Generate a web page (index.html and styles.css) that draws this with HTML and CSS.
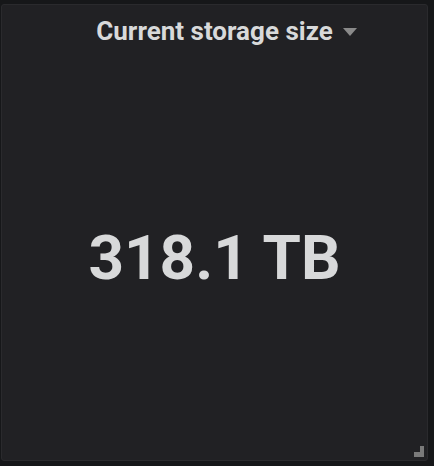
FILE: index.html
```html
<!DOCTYPE html>
<html lang="en">
<head>
    <meta charset="UTF-8">
    <meta name="viewport" content="width=device-width, initial-scale=1.0">
    <title>Current storage size</title>
    <link rel="stylesheet" href="styles.css">
</head>
<body>
    <div class="panel">
        <div class="panel-header">
            <span class="panel-title">Current storage size</span>
            <span class="panel-menu"></span>
        </div>
        <div class="panel-content">
            <span class="singlestat-value">318.1 TB</span>
        </div>
        <span class="resize-handle"></span>
    </div>
</body>
</html>
```

FILE: styles.css
```css
html, body {
    margin: 0;
    height: 100%;
    background-color: #161719;
}
body {
    padding: 4px 6px 5px 1px;
    box-sizing: border-box;
    font-family: Roboto, "Liberation Sans", sans-serif;
}
.panel {
    position: relative;
    height: 100%;
    box-sizing: border-box;
    background-color: #212124;
    border: 1px solid #2a2a2d;
    border-radius: 3px;
    display: flex;
    flex-direction: column;
}
.panel-header {
    display: flex;
    justify-content: center;
    align-items: center;
    gap: 10px;
    padding-top: 11px;
    padding-left: 24px;
}
.panel-title {
    color: #d8d9da;
    font-size: 26px;
    font-weight: 700;
}
.panel-menu {
    width: 0;
    height: 0;
    border-left: 7px solid transparent;
    border-right: 7px solid transparent;
    border-top: 8px solid #8a8a8a;
    margin-top: 2px;
}
.panel-content {
    flex: 1;
    display: flex;
    justify-content: center;
    align-items: center;
    padding-top: 8px;
}
.singlestat-value {
    color: #d8d9da;
    font-size: 62px;
    font-weight: 700;
}
.resize-handle {
    position: absolute;
    right: 3px;
    bottom: 3px;
    width: 10px;
    height: 11px;
    border-right: 4px solid #7a7a7a;
    border-bottom: 5px solid #7a7a7a;
    box-sizing: border-box;
}
```
